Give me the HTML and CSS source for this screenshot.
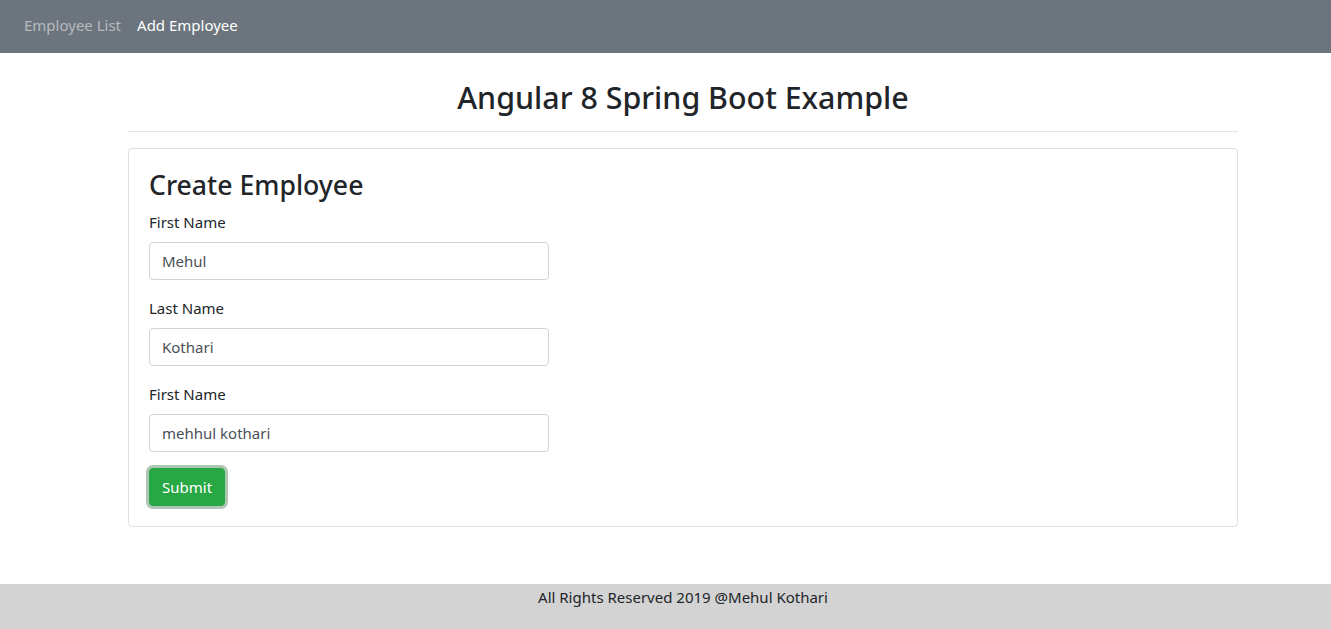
FILE: index.html
```html
<!DOCTYPE html>
<html lang="en">
<head>
<meta charset="utf-8">
<title>Angular 8 Spring Boot Example</title>
<link rel="stylesheet" href="styles.css">
</head>
<body>
<div class="page">
  <nav class="navbar">
    <a class="nav-link" href="#">Employee List</a>
    <a class="nav-link active" href="#">Add Employee</a>
  </nav>
  <main class="container">
    <h2 class="title">Angular 8 Spring Boot Example</h2>
    <hr class="divider">
    <div class="card">
      <h3 class="card-title">Create Employee</h3>
      <form class="form">
        <div class="form-group">
          <label class="label" for="fn">First Name</label>
          <input class="input" id="fn" type="text" value="Mehul">
        </div>
        <div class="form-group">
          <label class="label" for="ln">Last Name</label>
          <input class="input" id="ln" type="text" value="Kothari">
        </div>
        <div class="form-group">
          <label class="label" for="em">First Name</label>
          <input class="input" id="em" type="text" value="mehhul kothari">
        </div>
        <button class="btn" type="button">Submit</button>
      </form>
    </div>
  </main>
  <footer class="footer">All Rights Reserved 2019 @Mehul Kothari</footer>
</div>
</body>
</html>
```
FILE: styles.css
```css
html, body {
  margin: 0;
  padding: 0;
  overflow: hidden;
}
body {
  font-family: "Noto Sans", "Open Sans", sans-serif;
  font-size: 16px;
  line-height: 1.5;
  color: #212529;
  background: #fff;
}
.page {
  width: 1366px;
  min-height: 100vh;
  display: flex;
  flex-direction: column;
}
.navbar {
  height: 53px;
  background: #6c757d;
  display: flex;
  align-items: center;
  padding: 0 16px;
  box-sizing: border-box;
  flex: none;
}
.nav-link {
  color: rgba(255, 255, 255, 0.5);
  text-decoration: none;
  padding: 0 8px;
  font-size: 15px;
  line-height: 24px;
  margin-top: -3px;
}
.nav-link.active {
  color: #fff;
}
.container {
  width: 1110px;
  margin: 0 auto;
  flex: none;
}
.title {
  margin: 26px 0 0;
  font-size: 30.4px;
  font-weight: 500;
  line-height: 38px;
  text-align: center;
}
.divider {
  margin: 14px 0 16px;
  border: 0;
  border-top: 1px solid rgba(0, 0, 0, 0.1);
}
.card {
  border: 1px solid rgba(0, 0, 0, 0.125);
  border-radius: 4px;
  padding: 20px;
}
.card-title {
  margin: 0 0 8px;
  font-size: 26.6px;
  font-weight: 500;
  line-height: 33px;
}
.form-group {
  margin-bottom: 16px;
}
.label {
  display: block;
  margin-bottom: 8px;
  font-size: 15px;
  line-height: 24px;
}
.input {
  display: block;
  box-sizing: border-box;
  width: 400px;
  height: 38px;
  padding: 6px 12px;
  font-family: inherit;
  font-size: 15px;
  color: #495057;
  border: 1px solid #ced4da;
  border-radius: 4px;
  background: #fff;
  outline: none;
}
.btn {
  display: block;
  height: 38px;
  padding: 0 12px;
  font-family: inherit;
  font-size: 15px;
  color: #fff;
  background: #28a745;
  border: 1px solid #28a745;
  border-radius: 4px;
  box-shadow: 0 0 0 3px rgba(120, 160, 130, 0.6);
}
.footer {
  margin-top: auto;
  height: 45px;
  background: #d3d3d3;
  text-align: center;
  font-size: 15px;
  line-height: 24px;
  padding-top: 1px;
  box-sizing: border-box;
  flex: none;
}
```
